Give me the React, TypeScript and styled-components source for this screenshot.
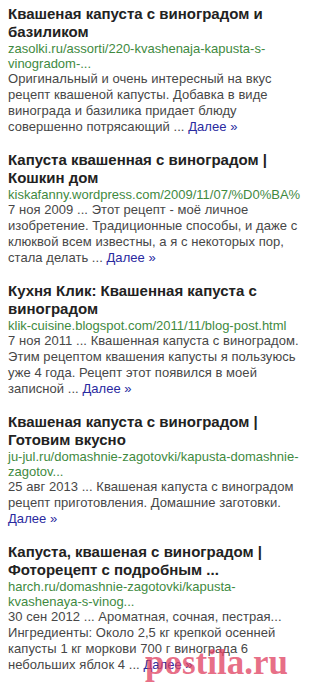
import styled, { createGlobalStyle } from "styled-components";

const results = [
  {
    title: "Квашеная капуста с виноградом и базиликом",
    url: "zasolki.ru/assorti/220-kvashenaja-kapusta-s-vinogradom-...",
    lines: [
      "Оригинальный и очень интересный на вкус",
      "рецепт квашеной капусты. Добавка в виде",
      "винограда и базилика придает блюду",
      "совершенно потрясающий ...",
    ],
  },
  {
    title: "Капуста квашенная с виноградом | Кошкин дом",
    url: "kiskafanny.wordpress.com/2009/11/07/%D0%BA%",
    noWrap: true,
    lines: [
      "7 ноя 2009 ... Этот рецепт - моё личное",
      "изобретение. Традиционные способы, и даже с",
      "клюквой всем известны, а я с некоторых пор,",
      "стала делать ...",
    ],
  },
  {
    title: "Кухня Клик: Квашенная капуста с виноградом",
    url: "klik-cuisine.blogspot.com/2011/11/blog-post.html",
    lines: [
      "7 ноя 2011 ... Квашенная капуста с виноградом.",
      "Этим рецептом квашения капусты я пользуюсь",
      "уже 4 года. Рецепт этот появился в моей",
      "записной ...",
    ],
  },
  {
    title: "Квашеная капуста с виноградом | Готовим вкусно",
    url: "ju-jul.ru/domashnie-zagotovki/kapusta-domashnie-zagotov...",
    lines: [
      "25 авг 2013 ... Квашеная капуста с виноградом",
      "рецепт приготовления. Домашние заготовки.",
      "",
    ],
  },
  {
    title: "Капуста, квашеная с виноградом | Фоторецепт с подробным ...",
    url: "harch.ru/domashnie-zagotovki/kapusta-kvashenaya-s-vinog...",
    lines: [
      "30 сен 2012 ... Ароматная, сочная, пестрая...",
      "Ингредиенты: Около 2,5 кг крепкой осенней",
      "капусты 1 кг моркови 700 г винограда 6",
      "небольших яблок 4 ...",
    ],
  },
];

const GlobalStyle = createGlobalStyle`
  html, body {
    margin: 0;
    padding: 0;
    background: #fff;
  }
  body {
    font-family: "Liberation Sans", Arial, sans-serif;
  }
`;

const Page = styled.div`
  position: relative;
  width: 304px;
  height: 698px;
  overflow: hidden;
  padding: 5px 4px 0 8px;
  box-sizing: border-box;
  display: flex;
  flex-direction: column;
  gap: 16px;
`;

const Result = styled.div`
  display: flex;
  flex-direction: column;
`;

const Title = styled.div`
  color: #222;
  font-size: 15px;
  font-weight: 700;
  line-height: 18px;
`;

const Url = styled.div<{ $noWrap?: boolean }>`
  color: #3f8a3f;
  font-size: 13px;
  line-height: 15px;
  white-space: ${(p) => (p.$noWrap ? "nowrap" : "normal")};
  margin-right: ${(p) => (p.$noWrap ? "-20px" : "0")};
`;

const Snippet = styled.div`
  color: #474747;
  font-size: 13px;
  letter-spacing: 0.05px;
  line-height: 16px;
`;

const Line = styled.div`
  white-space: nowrap;
`;

const More = styled.a`
  color: #2a2aa0;
  text-decoration: none;
`;

const Watermark = styled.div`
  position: absolute;
  left: 145px;
  top: 642px;
  font-family: "Liberation Serif", "Times New Roman", serif;
  font-weight: 700;
  font-size: 35px;
  line-height: 42px;
  color: rgba(224, 64, 96, 0.75);
  pointer-events: none;
`;

const App = () => {
  return (
    <>
      <GlobalStyle />
      <Page>
        {results.map((r, idx) => (
          <Result key={idx}>
            <Title>{r.title}</Title>
            <Url $noWrap={r.noWrap}>{r.url}</Url>
            <Snippet>
              {r.lines.map((line, i) =>
                i === r.lines.length - 1 ? (
                  <Line key={i}>
                    {line ? line + " " : ""}
                    <More href="#">Далее »</More>
                  </Line>
                ) : (
                  <Line key={i}>{line}</Line>
                )
              )}
            </Snippet>
          </Result>
        ))}
        <Watermark>postila.ru</Watermark>
      </Page>
    </>
  );
};

export default App;
